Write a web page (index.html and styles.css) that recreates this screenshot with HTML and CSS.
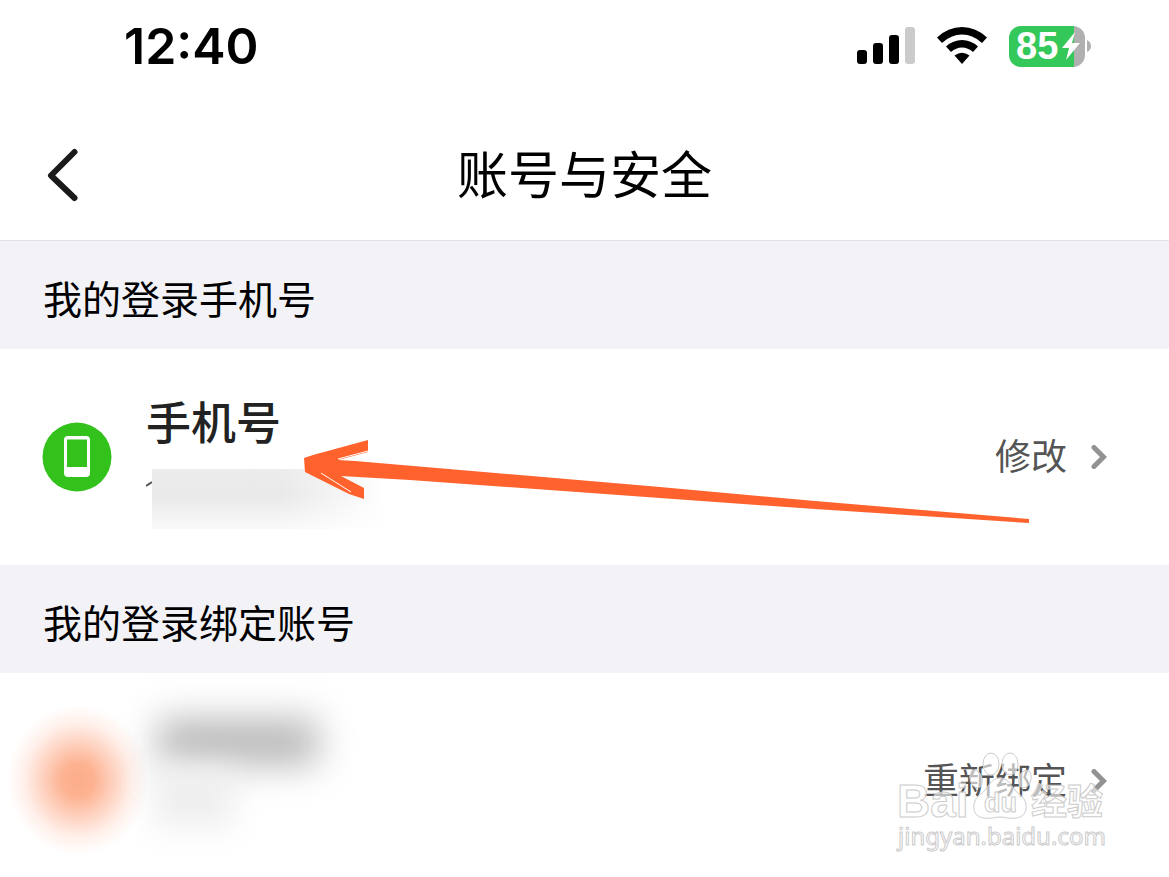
FILE: index.html
```html
<!DOCTYPE html>
<html lang="zh-CN">
<head>
<meta charset="utf-8">
<meta name="viewport" content="width=device-width, initial-scale=1">
<title>账号与安全</title>
<link rel="stylesheet" href="styles.css">
</head>
<body>
<div class="screen">
  <div class="status">
    <span class="time">12:40</span>
    <div class="indicators">
      <svg class="signal" width="58" height="38" viewBox="0 0 58 38" aria-hidden="true">
        <rect x="0" y="23" width="10" height="14" rx="3"/>
        <rect x="16" y="16" width="10" height="21" rx="3"/>
        <rect x="32" y="8" width="10" height="29" rx="3"/>
        <rect x="48" y="0" width="10" height="37" rx="3" fill="#cbcbcb"/>
      </svg>
      <svg class="wifi" width="50" height="38" viewBox="0 0 50 38" aria-hidden="true">
        <path d="M0 10.500Q11 0 25 0T50 10.500L45 16Q36 7.500 25 7.500T5 16Z"/>
        <path d="M9 19.500Q16 13 25 13T41 19.500L36 25Q31 20.500 25 20.500T14 25Z"/>
        <path d="M17.500 28.500Q25 23 32.500 28.500L25 37Z"/>
      </svg>
      <div class="battery">
        <span class="level">85</span>
        <svg class="bolt" width="18" height="28" viewBox="0 0 18 28" aria-hidden="true"><path d="M13 0L0 16H7L4 28L18 11H10Z"/></svg>
        <svg class="cap" width="4" height="12" viewBox="0 0 4 12" aria-hidden="true"><path d="M0 0Q4 2 4 6T0 12Z"/></svg>
      </div>
    </div>
  </div>

  <header class="nav">
    <button class="back" type="button" aria-label="返回">
      <svg width="32" height="54" viewBox="0 0 32 54" aria-hidden="true"><path d="M27.500 4L4 27.500L27.500 50"/></svg>
    </button>
    <h1 class="title">账号与安全</h1>
  </header>

  <main>
    <h2 class="section">我的登录手机号</h2>
    <div class="row">
      <svg class="phone-icon" width="70" height="70" viewBox="0 0 70 70" aria-hidden="true">
        <circle cx="35" cy="35" r="34.500" fill="#33c11c"/>
        <rect x="22" y="14" width="26" height="41" rx="4" fill="#fff"/>
        <path d="M25 17.500H45V45H25Z" fill="#33c11c"/>
      </svg>
      <div class="info">
        <h3 class="name">手机号</h3>
        <div class="masked">
          <svg width="6" height="20" viewBox="0 0 6 20" aria-hidden="true"><path d="M0 17L6 13"/></svg>
          <div class="mask"></div>
        </div>
      </div>
      <button class="action" type="button">修改
        <svg width="16" height="24" viewBox="0 0 16 24" aria-hidden="true"><path d="M3 2.500L12.500 12L3 21.500"/></svg>
      </button>
      <svg class="pointer" width="726" height="86" viewBox="0 0 726 86" aria-hidden="true">
        <path d="M0 18L9 15L64 0V12L34 20L51 21L356 47L511 61L725 79V83L511 69L356 58L106 40L37 36L60 48V59L45 54L1 32Z"/>
        <path class="scratch" d="M34 19L64 11M17 33L47 52"/>
      </svg>
    </div>

    <h2 class="section">我的登录绑定账号</h2>
    <div class="row">
      <div class="avatar-blur"></div>
      <div class="name-blur"></div>
      <div class="detail-blur"></div>
      <button class="action" type="button">重新绑定
        <svg width="16" height="24" viewBox="0 0 16 24" aria-hidden="true"><path d="M3 2.500L12.500 12L3 21.500"/></svg>
      </button>
      <svg class="watermark" width="216" height="110" viewBox="0 0 216 110" aria-label="Baidu经验">
        <g class="paw">
          <ellipse cx="97" cy="17" rx="8" ry="11"/>
          <ellipse cx="116" cy="17" rx="8" ry="11"/>
          <ellipse cx="82" cy="32" rx="6" ry="9" transform="rotate(-15 82 32)"/>
          <ellipse cx="131" cy="32" rx="6" ry="9" transform="rotate(15 131 32)"/>
          <path d="M106 31C96 31 94 42 87 47C77 53 77 70 90 71C97 72 101 70 106 70C111 70 115 72 122 71C135 70 135 53 125 47C118 42 116 31 106 31Z"/>
        </g>
        <text class="brand" x="3" y="70">Bai</text>
        <text class="du" x="90" y="65">du</text>
        <text class="cjk" x="137" y="68">经验</text>
        <text class="site" x="4" y="98">jingyan.baidu.com</text>
      </svg>
    </div>
  </main>
</div>
</body>
</html>
```
FILE: styles.css
```css
* {
  box-sizing: border-box;
}

body {
  margin: 0;
  background: #fff;
  color: #000;
  font-family: "Noto Sans CJK SC", sans-serif;
}

h1, h2, h3 {
  margin: 0;
  font-weight: 400;
}

button {
  border: 0;
  padding: 0;
  background: none;
  color: inherit;
  font: inherit;
}

svg {
  display: block;
  flex: none;
}

.screen {
  height: 100vh;
  overflow: hidden;
}

.status {
  display: flex;
  align-items: center;
  justify-content: space-between;
  height: 92px;
  padding: 0 84px 0 124px;
}

.time {
  font: 600 50px/60px Inter, sans-serif;
}

.indicators {
  display: flex;
  align-items: center;
  gap: 22px;
}

.battery {
  position: relative;
  display: flex;
  align-items: center;
  width: 76px;
  height: 41px;
  padding-left: 7px;
  border-radius: 12px;
  background: linear-gradient(90deg, #34c759 85%, #b0b0b0 85%);
}

.level {
  color: #fff;
  font: 700 38px/40px "Liberation Sans", sans-serif;
}

.bolt {
  position: absolute;
  right: 5px;
  fill: #fff;
}

.cap {
  position: absolute;
  right: -6px;
  fill: #b0b0b0;
}

.nav {
  position: relative;
  display: flex;
  align-items: center;
  justify-content: center;
  height: 149px;
  border-bottom: 1px solid #e2e2e5;
}

.back {
  position: absolute;
  left: 47px;
  top: 56px;
}

.back path {
  fill: none;
  stroke: #1a1a1a;
  stroke-width: 6;
  stroke-linecap: round;
  stroke-linejoin: round;
}

.title {
  padding-top: 12px;
  font-size: 51px;
  line-height: 72px;
}

.section {
  padding: 26px 43px 22px;
  background: #f2f2f7;
  font-size: 39px;
  line-height: 60px;
}

.row {
  position: relative;
  display: flex;
  align-items: center;
  height: 216px;
  padding: 0 62px 0 42px;
}

.info {
  flex: 1;
  padding-left: 34px;
}

.name {
  padding-top: 6px;
  color: #222;
  font-size: 45px;
  font-weight: 500;
  line-height: 60px;
}

.masked {
  display: flex;
  margin-top: 18px;
}

.masked path {
  fill: none;
  stroke: #555;
  stroke-width: 2;
}

.mask {
  width: 260px;
  height: 60px;
  background:
    linear-gradient(90deg, #fff0 50%, #fff 90%),
    linear-gradient(#ececec, #e9e9e9 45%, #fafafa);
}

.action {
  display: flex;
  align-items: center;
  gap: 24px;
  margin-left: auto;
  padding-bottom: 6px;
  color: #555;
  font-size: 36px;
  line-height: 48px;
}

.action svg {
  margin-top: 6px;
}

.action path {
  fill: none;
  stroke: #929292;
  stroke-width: 5;
  stroke-linecap: round;
}

.pointer {
  position: absolute;
  left: 304px;
  top: 91px;
  fill: #ff622d;
}

.pointer .scratch {
  fill: none;
  stroke: #fff;
  stroke-width: 1;
}

.avatar-blur {
  position: absolute;
  left: 7px;
  top: 32px;
  width: 142px;
  height: 150px;
  background: radial-gradient(closest-side, #fdad8a 0, #fdb291 22%, #fed2c0 50%, #fff0ea 76%, #fff0 100%);
}

.name-blur {
  position: absolute;
  left: 158px;
  top: 46px;
  width: 160px;
  height: 46px;
  background: #b8b8b8;
  filter: blur(18px);
}

.detail-blur {
  position: absolute;
  left: 154px;
  top: 94px;
  width: 80px;
  height: 60px;
  background: #eee;
  filter: blur(16px);
}

.watermark {
  position: absolute;
  right: 59px;
  top: 74px;
  fill: #fff9;
  stroke: #ccc;
  stroke-width: 1;
}

.brand {
  font: 700 46px "Liberation Sans", sans-serif;
}

.du {
  font: 700 27px "Liberation Sans", sans-serif;
}

.cjk {
  font: 700 36px "Noto Sans CJK SC", sans-serif;
}

.site {
  font: 400 24px "Noto Sans", sans-serif;
}
```
